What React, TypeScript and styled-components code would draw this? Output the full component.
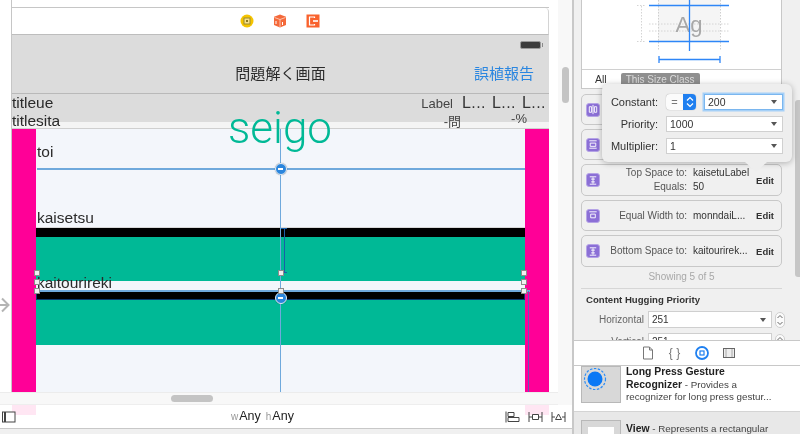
import React, { FC } from 'react'
import styled, { createGlobalStyle } from 'styled-components'

const SANS = `"Liberation Sans", Arial, "Noto Sans CJK JP", sans-serif`

const GlobalStyle = createGlobalStyle`
  html, body {
    margin: 0;
    padding: 0;
    background: #ffffff;
  }
  * {
    box-sizing: border-box;
  }
`

const handles = [
  [37, 273], [37, 282], [37, 291],
  [281, 273], [281, 291],
  [524, 273], [524, 282], [524, 291],
]

const ConstraintIcon: FC<{ kind: string }> = ({ kind }) => (
  <IconBadge>
    <svg width="13" height="13" viewBox="0 0 13 13" fill="none" stroke="#ffffff" strokeWidth="1">
      {kind === 'center' && <path d="M6.5 1.5v10M2.5 3.5h2.5v6H2.5zM8 3.5h2.5v6H8z" />}
      {kind === 'width' && <path d="M2.5 2.5h8M2.5 10.5h8M3.5 5h6v3.5h-6z" />}
      {kind === 'top' && <path d="M3 2.5h7M3 10.5h7M6.5 3v7M4.5 5h4M4.5 8h4" />}
      {kind === 'equal' && <path d="M2.5 2.5h8M4 5h5v4H4z" />}
    </svg>
  </IconBadge>
)

const Caret = () => <CaretMark />

const Stepper = () => (
  <StepperBox>
    <svg width="8" height="14" viewBox="0 0 8 14" fill="none" stroke="#666" strokeWidth="1">
      <path d="M1.500 5l2.500-2.500L6.500 5M1.500 9l2.500 2.500L6.500 9" />
    </svg>
  </StepperBox>
)

const App: FC = () => {
  return (
    <>
      <GlobalStyle />
      <Page>
        <CanvasColumn>
          <CanvasTop>
            <CanvasMain>
              <Scene>
                <PrevScene />
                <Dock>
                  <svg width="14" height="14" viewBox="0 0 14 14">
                    <circle cx="7" cy="7" r="6.5" fill="#f5c400" />
                    <rect x="4" y="4" width="6" height="6" fill="#f7e08a" stroke="#9a8a30" strokeWidth="1" />
                    <rect x="6" y="6" width="2" height="2" fill="#8a7a20" />
                  </svg>
                  <svg width="14" height="14" viewBox="0 0 14 14">
                    <path d="M7 .5l6 2.2v8.3L7 13.5 1 11V2.7z" fill="#f4693a" />
                    <path d="M1.5 3.5L7 5.5l5.5-2M7 5.5v8" stroke="#ffd9c9" strokeWidth=".8" fill="none" />
                    <path d="M3 7v3M9.5 8v3" stroke="#ffffff" strokeWidth="1" />
                  </svg>
                  <svg width="14" height="14" viewBox="0 0 14 14">
                    <rect width="13" height="13" y=".5" x=".5" fill="#f9622d" />
                    <path d="M8.5 4V3H3.5v8h5v-1" stroke="#ffffff" strokeWidth="1.2" fill="none" />
                    <path d="M7 7h5" stroke="#ffffff" strokeWidth="1.6" />
                  </svg>
                </Dock>
                <NavBar>
                  <StatusRow>
                    <Battery />
                  </StatusRow>
                  <TitleRow>
                    <span />
                    <NavTitle>問題解く画面</NavTitle>
                    <NavAction>誤植報告</NavAction>
                  </TitleRow>
                </NavBar>
                <Stats>
                  <StatsRow>
                    <StatText>titleue</StatText>
                    <StatCluster>
                      <SmallLabel>Label</SmallLabel>
                      <Truncated>L...</Truncated>
                      <Truncated>L...</Truncated>
                      <Truncated>L...</Truncated>
                    </StatCluster>
                  </StatsRow>
                  <StatsRow>
                    <StatText>titlesita</StatText>
                    <StatValues>
                      <SmallLabel>-問</SmallLabel>
                      <SmallLabel>-%</SmallLabel>
                    </StatValues>
                  </StatsRow>
                </Stats>
                <Content>
                  <PinkColumn />
                  <ContentMiddle>
                    <QuestionArea>
                      <BodyLabel>toi</BodyLabel>
                      <BodyLabel>kaisetsu</BodyLabel>
                    </QuestionArea>
                    <BlackBar />
                    <GreenBlock $h={44} />
                    <AnswerStrip>
                      <BodyLabel>kaitourireki</BodyLabel>
                    </AnswerStrip>
                    <BlackBar $selected />
                    <GreenBlock $h={45} />
                  </ContentMiddle>
                  <PinkColumn />
                </Content>
              </Scene>
              <HScroll>
                <HThumb />
              </HScroll>
            </CanvasMain>
            <VScroll>
              <VThumb />
            </VScroll>
          </CanvasTop>
          <BottomBar>
            <svg width="14" height="12" viewBox="0 0 14 12" fill="none" stroke="#444" strokeWidth="1">
              <rect x=".5" y="1" width="12.5" height="10" fill="#ffffff" />
              <path d="M3 1v10" strokeWidth="2" />
            </svg>
            <SizeClass>
              <SizeKey>w</SizeKey>Any<SizeGap />
              <SizeKey>h</SizeKey>Any
            </SizeClass>
            <BottomTools>
              <svg width="15" height="12" viewBox="0 0 15 12" fill="none" stroke="#444" strokeWidth="1">
                <path d="M1 .5v11M3 1.500h6v4H3zM3 6.500h11v4H3z" />
              </svg>
              <svg width="15" height="12" viewBox="0 0 15 12" fill="none" stroke="#444" strokeWidth="1">
                <path d="M1 1v10M14 1v10M1 6h3M11 6h3M4.500 3.500h6v5h-6z" />
              </svg>
              <svg width="15" height="12" viewBox="0 0 15 12" fill="none" stroke="#444" strokeWidth="1">
                <path d="M1 1v10M14 1v10M1 6h3M11 6h3M7.500 3l3 5.500h-6z" />
              </svg>
            </BottomTools>
          </BottomBar>

          <SceneArrow width="10" height="16" viewBox="0 0 10 16" fill="none" stroke="#b4b4b4" strokeWidth="2">
            <path d="M0 8h8M2 1.500L8.500 8 2 14.500" />
          </SceneArrow>
          <Seigo>seigo</Seigo>
          <GuideV $x={279.5} $y={129} $h={263} />
          <GuideH $x={37} $y={169} $w={488} />
          <GuideH $x={37} $y={291} $w={493} />
          <DarkLine $x={284} $y={228} $h={45} />
          <DarkCap $x={284} $y={228} />
          <DarkCap $x={284} $y={272} />
          <PurpleLine $x={528} $y={291} $h={101} />
          <HandleDot $x={281} $y={169} />
          <HandleDot $x={281} $y={298} />
          {handles.map(([x, y]) => (
            <SquareHandle key={`${x}-${y}`} $x={x} $y={y} />
          ))}
        </CanvasColumn>

        <Inspector>
          <InspectorScroll>
            <PreviewPanel>
              <PreviewArea>
                <svg width="199" height="70" viewBox="581 0 199 70">
                  <rect x="657" y="0" width="62" height="41" fill="#f5f5f5" />
                  <path d="M657.500 0v50M719.500 0v50" stroke="#cfcfcf" strokeDasharray="1.500 1.500" />
                  <path d="M648 24h80M648 31h80" stroke="#d4d4d4" strokeDasharray="1.500 1.500" />
                  <path d="M636 5.500h8M636 41.500h8M640.500 6v35" stroke="#d4d4d4" strokeDasharray="1.500 1.500" />
                  <AgText x="688" y="32" textAnchor="middle">Ag</AgText>
                  <path d="M648 5.500h80M648 41.500h80M688.500 0v51M658 59.500h61M658 56v7M719 56v7" stroke="#2e86f7" strokeWidth="1.300" />
                </svg>
              </PreviewArea>
              <TabRow>
                <AllTab>All</AllTab>
                <SizePill>This Size Class</SizePill>
              </TabRow>
            </PreviewPanel>
            <RowList>
              <ConstraintRow $h={31}>
                <ConstraintIcon kind="center" />
              </ConstraintRow>
              <ConstraintRow $h={31}>
                <ConstraintIcon kind="width" />
              </ConstraintRow>
              <ConstraintRow $h={32}>
                <ConstraintIcon kind="top" />
                <RowGrid>
                  <RowKey>Top Space to:</RowKey>
                  <RowValue>kaisetuLabel</RowValue>
                  <RowKey>Equals:</RowKey>
                  <RowValue>50</RowValue>
                </RowGrid>
                <EditLink>Edit</EditLink>
              </ConstraintRow>
              <ConstraintRow $h={31}>
                <ConstraintIcon kind="equal" />
                <RowGrid>
                  <RowKey>Equal Width to:</RowKey>
                  <RowValue>monndaiL...</RowValue>
                </RowGrid>
                <EditLink>Edit</EditLink>
              </ConstraintRow>
              <ConstraintRow $h={32}>
                <ConstraintIcon kind="top" />
                <RowGrid>
                  <RowKey>Bottom Space to:</RowKey>
                  <RowValue>kaitourirek...</RowValue>
                </RowGrid>
                <EditLink>Edit</EditLink>
              </ConstraintRow>
            </RowList>
            <ShowingText>Showing 5 of 5</ShowingText>
            <SectionTitle>Content Hugging Priority</SectionTitle>
            <PriorityRow>
              <PriorityKey>Horizontal</PriorityKey>
              <PriorityField>251<Caret /></PriorityField>
              <Stepper />
            </PriorityRow>
            <PriorityRow>
              <PriorityKey>Vertical</PriorityKey>
              <PriorityField>251<Caret /></PriorityField>
              <Stepper />
            </PriorityRow>
          </InspectorScroll>
          <InspectorTabs>
            <svg width="12" height="14" viewBox="0 0 12 14" fill="#ffffff" stroke="#777" strokeWidth="1">
              <path d="M1.500 1h6l3 3v9h-9z" />
              <path d="M7.500 1v3h3" fill="none" />
            </svg>
            <TabBraces>{'{ }'}</TabBraces>
            <svg width="14" height="14" viewBox="0 0 14 14" fill="none" stroke="#1f80f0">
              <circle cx="7" cy="7" r="6" strokeWidth="1.800" />
              <rect x="5" y="5" width="4" height="4" strokeWidth="1.200" />
            </svg>
            <svg width="12" height="12" viewBox="0 0 12 12" fill="none" stroke="#666" strokeWidth="1">
              <rect x=".5" y="1.500" width="11" height="9" fill="#eeeeee" />
              <path d="M3 1.500v9M9 1.500v9" strokeDasharray="1 1" />
            </svg>
          </InspectorTabs>
          <LibraryRow>
            <LibraryThumb>
              <svg width="24" height="24" viewBox="0 0 24 24">
                <circle cx="12" cy="12" r="10.500" fill="none" stroke="#2b8cf5" strokeWidth="1.200" strokeDasharray="2.500 1.500" />
                <circle cx="12" cy="12" r="7.500" fill="#0a78f5" />
              </svg>
            </LibraryThumb>
            <LibraryText>
              <b>Long Press Gesture</b>
              <br />
              <b>Recognizer</b> - Provides a
              <br />
              recognizer for long press gestur...
            </LibraryText>
          </LibraryRow>
          <LibraryRow $alt>
            <LibraryThumb $alt>
              <ViewSwatch />
            </LibraryThumb>
            <LibraryText $alt>
              <b>View</b> - Represents a rectangular
            </LibraryText>
          </LibraryRow>
          <InspectorThumb />

          <Popover>
            <PopoverGrid>
              <PopoverKey>Constant:</PopoverKey>
              <ConstantControls>
                <Relation>
                  <RelationText>=</RelationText>
                  <RelationStepper>
                    <svg width="8" height="12" viewBox="0 0 8 12" fill="none" stroke="#ffffff" strokeWidth="1.200">
                      <path d="M1 4.500l3-3 3 3M1 7.500l3 3 3-3" />
                    </svg>
                  </RelationStepper>
                </Relation>
                <PopoverSelect $focused>200<Caret /></PopoverSelect>
              </ConstantControls>
              <PopoverKey>Priority:</PopoverKey>
              <PopoverSelect>1000<Caret /></PopoverSelect>
              <PopoverKey>Multiplier:</PopoverKey>
              <PopoverSelect>1<Caret /></PopoverSelect>
            </PopoverGrid>
            <PopoverArrow />
          </Popover>
        </Inspector>
      </Page>
    </>
  )
}

const Page = styled.div`
  display: flex;
  width: 800px;
  height: 434px;
  overflow: hidden;
  font-family: ${SANS};
  color: #222222;
  background: #ffffff;
  filter: blur(0.3px);
`

const CanvasColumn = styled.div`
  position: relative;
  display: flex;
  flex-direction: column;
  width: 572px;
  height: 434px;
  overflow: hidden;
  background: #f0f0f0;
`

const CanvasTop = styled.div`
  display: flex;
  height: 405px;
  background: #ffffff;
`

const CanvasMain = styled.div`
  display: flex;
  flex-direction: column;
  width: 558px;
`

const Scene = styled.div`
  display: flex;
  flex-direction: column;
  width: 538px;
  height: 392px;
  margin-left: 11px;
  border-left: 1px solid #c6c6c6;
  overflow: hidden;
`

const PrevScene = styled.div`
  flex: none;
  height: 8px;
  border-bottom: 1px solid #c6c6c6;
  background: #ffffff;
`

const Dock = styled.div`
  flex: none;
  display: flex;
  align-items: center;
  justify-content: center;
  gap: 19px;
  height: 27px;
  padding: 0 0 1px 0;
  background: #ffffff;
  border-right: 1px solid #d4d4d4;
  border-bottom: 1px solid #bdbdbd;
  border-top-right-radius: 4px;
`

const NavBar = styled.div`
  flex: none;
  display: flex;
  flex-direction: column;
  height: 59px;
  background: #dcdcdc;
  border-bottom: 1px solid #b9b9b9;
`

const StatusRow = styled.div`
  display: flex;
  justify-content: flex-end;
  padding: 6px 8px 0 0;
  height: 24px;
`

const Battery = styled.div`
  position: relative;
  width: 21px;
  height: 8px;
  background: #3c3c3c;
  border: 1px solid #9a9a9a;
  border-radius: 2px;
  &::after {
    content: '';
    position: absolute;
    right: -3px;
    top: 1px;
    width: 1.500px;
    height: 4px;
    background: #8a8a8a;
  }
`

const TitleRow = styled.div`
  display: grid;
  grid-template-columns: 1fr auto 1fr;
  align-items: center;
  height: 26px;
`

const NavTitle = styled.div`
  font-size: 15px;
  color: #2b2b2b;
  letter-spacing: 0.1px;
`

const NavAction = styled.div`
  justify-self: end;
  padding-right: 15px;
  font-size: 15px;
  color: #2a86e0;
`

const Stats = styled.div`
  flex: none;
  display: flex;
  flex-direction: column;
  height: 35px;
  padding-top: 0;
  background: linear-gradient(#dcdcdc 28px, #f4f4f4 28px);
  border-bottom: 1px solid #cfcfcf;
`

const StatsRow = styled.div`
  display: flex;
  align-items: center;
  justify-content: space-between;
  height: 18px;
`

const StatText = styled.div`
  font-size: 15.5px;
  line-height: 18px;
  color: #2a2a2a;
`

const StatCluster = styled.div`
  display: flex;
  align-items: center;
  gap: 9px;
  padding-right: 6px;
`

const StatValues = styled.div`
  display: flex;
  gap: 50px;
  padding: 0 22px 1px 0;
`

const SmallLabel = styled.div`
  font-size: 13px;
  color: #444444;
`

const Truncated = styled.div`
  width: 21px;
  font-size: 16px;
  letter-spacing: 0.4px;
  color: #333333;
  white-space: nowrap;
`

const Content = styled.div`
  flex: 1;
  display: flex;
  min-height: 0;
  background: #f3f6fb;
`

const PinkColumn = styled.div`
  flex: none;
  width: 24px;
  background: #ff0097;
`

const ContentMiddle = styled.div`
  flex: 1;
  display: flex;
  flex-direction: column;
  min-width: 0;
`

const QuestionArea = styled.div`
  flex: none;
  display: flex;
  flex-direction: column;
  justify-content: space-between;
  height: 99px;
  padding: 14px 0 0 1px;
  margin-bottom: 0;
  border-bottom: 1px solid #d8d8d8;
`

const BodyLabel = styled.div`
  font-size: 15.5px;
  line-height: 18px;
  color: #2a2a2a;
`

const BlackBar = styled.div<{ $selected?: boolean }>`
  flex: none;
  height: 9px;
  background: #000000;
  border: ${(p) => (p.$selected ? '1px solid #0a3a70' : 'none')};
`

const GreenBlock = styled.div<{ $h: number }>`
  flex: none;
  height: ${(p) => p.$h}px;
  background: #00b996;
`

const AnswerStrip = styled.div`
  flex: none;
  height: 10px;
  padding-left: 1px;
  & > div {
    height: 9px;
    line-height: 9px;
    margin-top: -3px;
  }
`

const HScroll = styled.div`
  flex: none;
  height: 13px;
  display: flex;
  align-items: center;
  padding-left: 171px;
  background: #f8f8f8;
  border-top: 1px solid #ececec;
  border-bottom: 1px solid #eeeeee;
`

const HThumb = styled.div`
  width: 42px;
  height: 7px;
  border-radius: 4px;
  background: #c4c4c4;
`

const VScroll = styled.div`
  flex: none;
  width: 14px;
  padding: 67px 0 0 4px;
  background: #f8f8f8;
`

const VThumb = styled.div`
  width: 7px;
  height: 36px;
  border-radius: 4px;
  background: #c4c4c4;
`

const BottomBar = styled.div`
  position: relative;
  flex: none;
  display: flex;
  align-items: center;
  justify-content: space-between;
  height: 24px;
  padding: 0 6px 0 2px;
  background: #ffffff;
  border-bottom: 1px solid #c8c8c8;
  background-image: linear-gradient(#ffe6f3, #ffe6f3), linear-gradient(#ffe6f3, #ffe6f3);
  background-repeat: no-repeat;
  background-size: 24px 10px, 24px 10px;
  background-position: 12px 0, 525px 0;
`

const SizeClass = styled.div`
  position: absolute;
  left: 231px;
  top: 4px;
  font-size: 12.5px;
  color: #222222;
`

const SizeKey = styled.span`
  font-size: 10px;
  color: #999999;
  margin-right: 1px;
`

const SizeGap = styled.span`
  display: inline-block;
  width: 5px;
`

const BottomTools = styled.div`
  display: flex;
  align-items: center;
  gap: 8px;
`

const SceneArrow = styled.svg`
  position: absolute;
  left: 0;
  top: 297px;
`

const Seigo = styled.div`
  position: absolute;
  left: 228px;
  top: 102px;
  font-family: Roboto, ${SANS};
  font-weight: 300;
  font-size: 44px;
  line-height: 52px;
  color: #00b996;
`

const GuideV = styled.div<{ $x: number; $y: number; $h: number }>`
  position: absolute;
  left: ${(p) => p.$x}px;
  top: ${(p) => p.$y}px;
  width: 1.5px;
  height: ${(p) => p.$h}px;
  background: #6fa9dc;
`

const GuideH = styled.div<{ $x: number; $y: number; $w: number }>`
  position: absolute;
  left: ${(p) => p.$x}px;
  top: ${(p) => p.$y - 1}px;
  width: ${(p) => p.$w}px;
  height: 1.5px;
  background: #6fa9dc;
`

const DarkLine = styled.div<{ $x: number; $y: number; $h: number }>`
  position: absolute;
  left: ${(p) => p.$x}px;
  top: ${(p) => p.$y}px;
  width: 1px;
  height: ${(p) => p.$h}px;
  background: #1a5fa8;
`

const DarkCap = styled.div<{ $x: number; $y: number }>`
  position: absolute;
  left: ${(p) => p.$x - 3}px;
  top: ${(p) => p.$y}px;
  width: 6px;
  height: 1px;
  background: #1a5fa8;
`

const PurpleLine = styled.div<{ $x: number; $y: number; $h: number }>`
  position: absolute;
  left: ${(p) => p.$x}px;
  top: ${(p) => p.$y}px;
  width: 1px;
  height: ${(p) => p.$h}px;
  background: #6a55b5;
`

const HandleDot = styled.div<{ $x: number; $y: number }>`
  position: absolute;
  left: ${(p) => p.$x - 6}px;
  top: ${(p) => p.$y - 6}px;
  width: 12px;
  height: 12px;
  border-radius: 50%;
  background: #2b86dd;
  border: 1.5px solid #e4eef8;
  box-shadow: 0 0 1px rgba(0, 0, 0, 0.5);
  &::after {
    content: '';
    position: absolute;
    left: 2px;
    top: 3.500px;
    width: 5px;
    height: 2px;
    background: #ffffff;
  }
`

const SquareHandle = styled.div<{ $x: number; $y: number }>`
  position: absolute;
  left: ${(p) => p.$x - 3}px;
  top: ${(p) => p.$y - 3}px;
  width: 6px;
  height: 6px;
  background: #f0f0f0;
  border: 1px solid #8c8c8c;
`

const Inspector = styled.div`
  position: relative;
  display: flex;
  flex-direction: column;
  width: 228px;
  height: 434px;
  overflow: hidden;
  background: #f0f0f0;
  border-left: 2px solid #c8c8c8;
`

const InspectorScroll = styled.div`
  flex: none;
  height: 340px;
  padding-left: 7px;
  overflow: hidden;
`

const PreviewPanel = styled.div`
  width: 201px;
  background: #ffffff;
  border: 1px solid #c8c8c8;
  border-top: none;
`

const PreviewArea = styled.div`
  display: flex;
  height: 70px;
  border-bottom: 1px solid #d0d0d0;
`

const AgText = styled.text`
  font-family: ${SANS};
  font-size: 22px;
  fill: #a8a8a8;
`

const TabRow = styled.div`
  display: flex;
  align-items: center;
  height: 18px;
  padding-left: 13px;
`

const AllTab = styled.div`
  font-size: 10.5px;
  color: #333333;
`

const SizePill = styled.div`
  margin-left: 14px;
  padding: 0 5px;
  height: 13px;
  line-height: 13px;
  font-size: 10px;
  color: #dddddd;
  background: #8f8f8f;
  border-radius: 2px;
`

const RowList = styled.div`
  display: flex;
  flex-direction: column;
  gap: 4px;
  width: 201px;
  margin-top: 5px;
`

const ConstraintRow = styled.div<{ $h: number }>`
  display: flex;
  align-items: center;
  height: ${(p) => p.$h}px;
  padding: 0 7px 0 4px;
  background: #f0f0f0;
  border: 1px solid #c8c8c8;
  border-radius: 5px;
`

const IconBadge = styled.div`
  flex: none;
  display: flex;
  align-items: center;
  justify-content: center;
  width: 14px;
  height: 14px;
  border-radius: 3px;
  background: #8b6fd6;
  border: 1px solid #b5a3e6;
`

const RowGrid = styled.div`
  flex: 1;
  display: grid;
  grid-template-columns: 87px 1fr;
  column-gap: 6px;
  row-gap: 2px;
  align-items: center;
  font-size: 10px;
  line-height: 12px;
`

const RowKey = styled.div`
  text-align: right;
  color: #555555;
  white-space: nowrap;
`

const RowValue = styled.div`
  color: #333333;
  white-space: nowrap;
`

const EditLink = styled.div`
  flex: none;
  font-size: 9.5px;
  font-weight: 700;
  color: #333333;
`

const ShowingText = styled.div`
  width: 201px;
  height: 19px;
  margin-top: 3px;
  font-size: 10px;
  line-height: 14px;
  text-align: center;
  color: #a8a8a8;
  border-bottom: 1px solid #d6d6d6;
`

const SectionTitle = styled.div`
  margin-top: 4px;
  padding-left: 5px;
  font-size: 9.6px;
  line-height: 14px;
  font-weight: 700;
  color: #333333;
`

const PriorityRow = styled.div`
  display: flex;
  align-items: center;
  gap: 4px;
  height: 19px;
  margin: 3px 0 1px;
`

const PriorityKey = styled.div`
  width: 63px;
  text-align: right;
  font-size: 10px;
  color: #666666;
`

const PriorityField = styled.div`
  position: relative;
  width: 124px;
  height: 17px;
  padding-left: 3px;
  font-size: 10px;
  line-height: 16px;
  color: #333333;
  background: #ffffff;
  border: 1px solid #cfcfcf;
`

const CaretMark = styled.span`
  position: absolute;
  right: 5px;
  top: 50%;
  margin-top: -2px;
  border-left: 3.500px solid transparent;
  border-right: 3.500px solid transparent;
  border-top: 4px solid #555555;
`

const StepperBox = styled.div`
  display: flex;
  align-items: center;
  justify-content: center;
  width: 10px;
  height: 16px;
  margin-left: -1px;
  background: #fbfbfb;
  border: 1px solid #cfcfcf;
  border-radius: 5px;
`

const InspectorTabs = styled.div`
  flex: none;
  display: flex;
  align-items: center;
  justify-content: center;
  gap: 14px;
  height: 26px;
  padding-left: 3px;
  background: #ffffff;
  border-top: 1px solid #c8c8c8;
  border-bottom: 1px solid #c8c8c8;
`

const TabBraces = styled.div`
  width: 13px;
  font-size: 12px;
  color: #777777;
  white-space: nowrap;
  text-align: center;
`

const LibraryRow = styled.div<{ $alt?: boolean }>`
  flex: none;
  display: flex;
  gap: 5px;
  height: ${(p) => (p.$alt ? 22 : 46)}px;
  padding: ${(p) => (p.$alt ? '8px' : '0')} 0 0 7px;
  background: ${(p) => (p.$alt ? '#e8e8e8' : '#ffffff')};
  border-bottom: ${(p) => (p.$alt ? 'none' : '1px solid #d4d4d4')};
`

const LibraryThumb = styled.div<{ $alt?: boolean }>`
  flex: none;
  display: flex;
  align-items: flex-start;
  justify-content: ${(p) => (p.$alt ? 'center' : 'flex-start')};
  width: 40px;
  height: ${(p) => (p.$alt ? 30 : 37)}px;
  padding: ${(p) => (p.$alt ? '6px 0 0' : '0 0 0 1px')};
  background: #d8d8d8;
  border: 1px solid #b8b8b8;
`

const ViewSwatch = styled.div`
  width: 26px;
  height: 20px;
  background: #ffffff;
`

const LibraryText = styled.div<{ $alt?: boolean }>`
  padding-top: ${(p) => (p.$alt ? 3 : 0)}px;
  font-size: 9.8px;
  line-height: 12.500px;
  color: #444444;
  white-space: nowrap;
  & b {
    font-size: 10.4px;
    color: #222222;
  }
`

const InspectorThumb = styled.div`
  position: absolute;
  right: 0;
  top: 100px;
  width: 5px;
  height: 177px;
  background: #c6c6c6;
  border-radius: 3px 0 0 3px;
`

const Popover = styled.div`
  position: absolute;
  left: 28px;
  top: 84px;
  width: 190px;
  height: 78px;
  padding: 10px 9px 0 0;
  background: #eeeeee;
  border-radius: 6px;
  box-shadow: 0 1px 6px rgba(0, 0, 0, 0.28);
`

const PopoverGrid = styled.div`
  display: grid;
  grid-template-columns: 56px 1fr;
  column-gap: 8px;
  row-gap: 6px;
  align-items: center;
`

const PopoverKey = styled.div`
  text-align: right;
  font-size: 11px;
  color: #333333;
  white-space: nowrap;
`

const ConstantControls = styled.div`
  display: flex;
  gap: 8px;
`

const Relation = styled.div`
  display: flex;
  width: 30px;
  height: 16px;
  border-radius: 4px;
  overflow: hidden;
  background: #fbfbfb;
  box-shadow: 0 0 1px rgba(0, 0, 0, 0.4);
`

const RelationText = styled.div`
  flex: 1;
  text-align: center;
  font-size: 11px;
  line-height: 16px;
  color: #777777;
`

const RelationStepper = styled.div`
  display: flex;
  align-items: center;
  justify-content: center;
  width: 13px;
  background: #1f7ff0;
`

const PopoverSelect = styled.div<{ $focused?: boolean }>`
  position: relative;
  flex: 1;
  height: 16px;
  padding-left: 3px;
  font-size: 10.5px;
  line-height: 15px;
  color: #333333;
  background: #ffffff;
  border: 1px solid ${(p) => (p.$focused ? '#7ab6ef' : '#d0d0d0')};
  box-shadow: ${(p) => (p.$focused ? '0 0 0 1.5px #a5d0f7' : 'none')};
`

const PopoverArrow = styled.div`
  position: absolute;
  right: 25px;
  bottom: -10px;
  width: 0;
  height: 0;
  border-left: 11px solid transparent;
  border-right: 11px solid transparent;
  border-top: 10px solid #eeeeee;
`

export default App
